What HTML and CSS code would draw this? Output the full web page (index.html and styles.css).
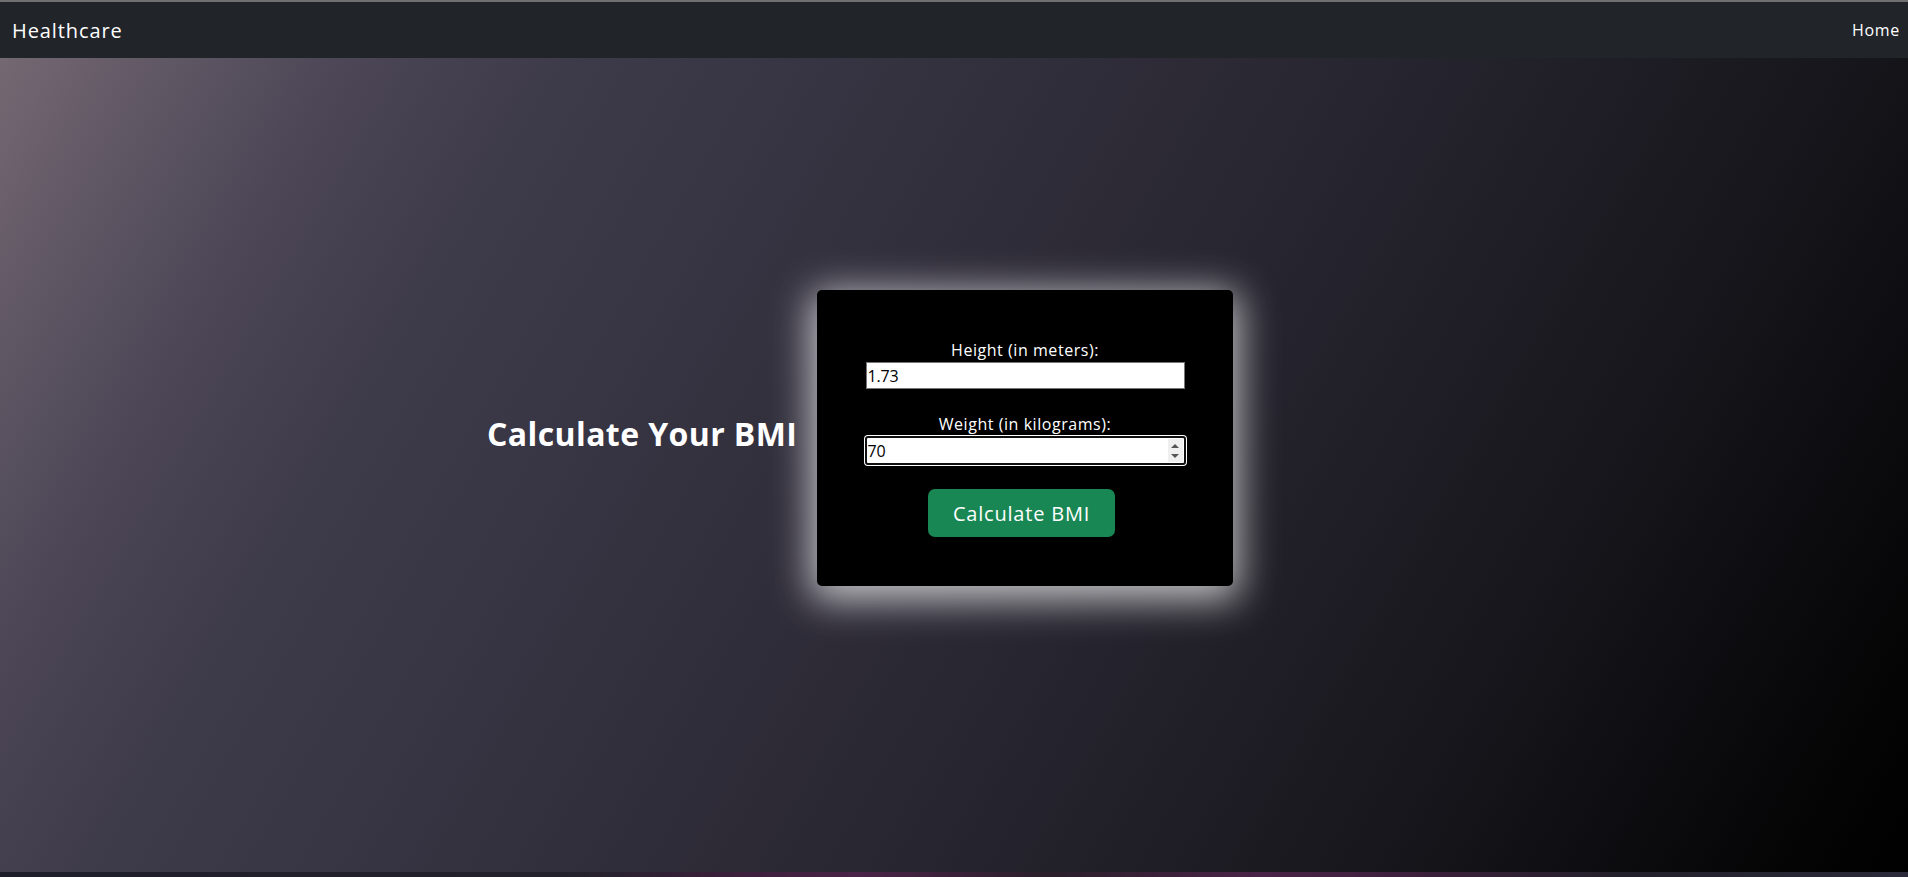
FILE: index.html
```html
<!DOCTYPE html>
<html lang="en">
<head>
<meta charset="utf-8">
<title>Healthcare - BMI</title>
<link rel="stylesheet" href="styles.css">
</head>
<body>
<div class="page">
  <nav class="navbar">
    <a class="brand" href="#">Healthcare</a>
    <a class="nav-link" href="#">Home</a>
  </nav>
  <main class="hero">
    <h2 class="title">Calculate Your BMI</h2>
    <div class="card">
      <form class="bmi-form">
        <label class="field-label" for="height">Height (in meters):</label>
        <input class="field" id="height" type="text" value="1.73">
        <label class="field-label second" for="weight">Weight (in kilograms):</label>
        <div class="field-wrap">
          <input class="field focused" id="weight" type="text" value="70">
          <span class="spinner">
            <svg width="10" height="18" viewBox="0 0 10 18"><path d="M1 6 L5 2 L9 6 Z" fill="#555"/><path d="M1 12 L5 16 L9 12 Z" fill="#555"/></svg>
          </span>
        </div>
        <button class="btn" type="button">Calculate BMI</button>
      </form>
    </div>
  </main>
  <div class="strip"></div>
</div>
</body>
</html>
```

FILE: styles.css
```css
* { box-sizing: border-box; }
html, body { margin: 0; padding: 0; }
body {
  font-family: "Open Sans", "Liberation Sans", sans-serif;
  background: #1b1a20;
  color: #fff;
  height: 877px;
  overflow: hidden;
}
.page {
  display: flex;
  flex-direction: column;
  height: 877px;
  border-top: 2px solid #6f6f6f;
}
.navbar {
  height: 56px;
  background: #212529;
  display: flex;
  align-items: center;
  justify-content: space-between;
  padding: 0 8px 0 12px;
  flex: none;
}
.brand {
  color: #fff;
  text-decoration: none;
  font-size: 20px;
  letter-spacing: 0.9px;
}
.nav-link {
  color: #fff;
  text-decoration: none;
  font-size: 16px;
  letter-spacing: 0.7px;
}
.hero {
  flex: none;
  height: 814px;
  background: linear-gradient(120deg, #746872 0%, #4d4757 14%, #3d3a4a 24%, #34313f 40%, #27252f 58%, #17161c 78%, #050506 94%, #000 100%);
  display: flex;
  align-items: center;
  padding: 0 0 54px 487px;
  gap: 22px;
}
.title {
  margin: 0 0 10px 0;
  font-size: 32px;
  font-weight: 700;
  letter-spacing: 0.4px;
  color: #fff;
  width: 308px;
  white-space: nowrap;
}
.card {
  width: 416px;
  height: 296px;
  background: #000;
  border-radius: 5px;
  box-shadow: 0 8px 38px 6px rgba(255, 255, 255, 0.72);
  padding-top: 48px;
}
.bmi-form {
  display: flex;
  flex-direction: column;
  align-items: center;
}
.field-label {
  font-size: 16px;
  letter-spacing: 0.55px;
  line-height: 24px;
  height: 24px;
  color: #fff;
}
.field-label.second { margin-top: 23px; }
.field {
  width: 319px;
  height: 27px;
  border: 1px solid #767676;
  background: #fff;
  font-family: "Open Sans", "Liberation Sans", sans-serif;
  font-size: 16px;
  color: #000;
  padding: 0 0 0 1px;
  letter-spacing: -0.2px;
  outline: none;
  display: block;
}
.field-wrap {
  position: relative;
  width: 321px;
  height: 29px;
}
.field.focused {
  width: 321px;
  height: 29px;
  border: 2px solid #101010;
  border-radius: 3px;
  box-shadow: 0 0 0 1px #fff;
}
.spinner {
  position: absolute;
  right: 3px;
  top: 3px;
  width: 15px;
  height: 23px;
  background: #efefef;
  display: flex;
  align-items: center;
  justify-content: center;
}
.btn {
  margin: 24px 7px 0 0;
  width: 187px;
  height: 48px;
  border: none;
  border-radius: 7px;
  background: #198754;
  color: #fff;
  font-family: "Open Sans", "Liberation Sans", sans-serif;
  font-size: 20px;
  letter-spacing: 0.8px;
}
.strip {
  flex: 1;
  background: linear-gradient(90deg, #1e1d2a 0%, #23222c 30%, #3a1f3a 38%, #4a2348 45%, #2a1f2a 55%, #4a2348 66%, #3a1f3a 75%, #22202a 85%, #2a2a3a 100%);
}
```
